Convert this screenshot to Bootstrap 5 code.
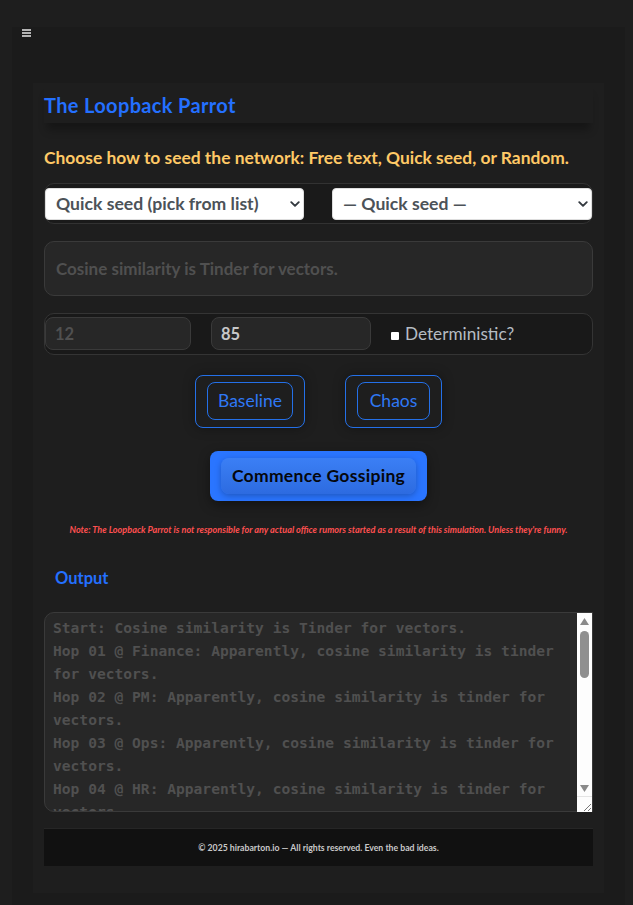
<!DOCTYPE html>
<html lang="en">
<head>
  <meta charset="UTF-8">
  <title>The Loopback Parrot</title>
  <meta name="viewport" content="width=device-width, initial-scale=1">
  <link href="https://cdn.jsdelivr.net/npm/bootstrap@5.3.3/dist/css/bootstrap.min.css" rel="stylesheet">
  <style>
    html, body { height: 905px; overflow: hidden; }
    body {
      background: #1e1e1e;
      font-family: "Lato", "Liberation Sans", sans-serif;
      padding: 27px 8px 0 12px;
    }
    .outer-wrap {
      background: #1b1b1b;
      height: 878px;
      padding: 56px 21px 0 21px;
      position: relative;
    }
    .menu-toggle {
      position: absolute;
      left: 10px;
      top: 2px;
      display: block;
    }
    .inner-panel {
      background: #1e1e1e;
      height: 810px;
      padding: 0 11px;
    }
    .app-title {
      color: #2470ff;
      font-size: 20px;
      font-weight: 700;
      letter-spacing: .35px;
      line-height: 24px;
      margin: 0;
      padding-top: 10px;
      height: 40px;
      background: #1e1e1e;
      box-shadow: 0 10px 8px -3px rgba(0,0,0,.28);
    }
    .seed-label {
      color: #ffc966;
      font-size: 17.4px;
      font-weight: 700;
      line-height: 22px;
      margin: 24px 0 14px;
    }
    .seed-row {
      background: #1a1a1a;
      border: 1px solid #323232;
      border-radius: 10px;
      height: 41px;
      padding: 4px 0 0 0;
      gap: 28px;
    }
    .seed-row .form-select {
      height: 32px;
      font-size: 17.6px;
      font-weight: 700;
      color: #4c5258;
      padding: 0 10px;
      border-radius: 4px;
      border: 1px solid #ddd;
      background-image: url("data:image/svg+xml,%3Csvg xmlns='http://www.w3.org/2000/svg' viewBox='0 0 16 16'%3E%3Cpath fill='none' stroke='%23343a40' stroke-linecap='round' stroke-linejoin='round' stroke-width='3' d='m2 5 6 6 6-6'/%3E%3C/svg%3E");
      background-position: right 3px center;
      background-size: 10px 10px;
    }
    .seed-row .form-select:first-child { flex: 0 0 259px; }
    .seed-text {
      background: #272727;
      border: 1px solid #3a3a3a;
      border-radius: 10px;
      height: 55px;
      margin-top: 17px;
      padding: 0 11px;
      font-size: 17px;
      font-weight: 700;
    }
    .seed-text::placeholder { color: #505050; opacity: 1; }
    .seed-text:focus, .num-box:focus { background: #272727; }
    .num-row {
      background: #191919;
      border: 1px solid #343434;
      border-radius: 10px;
      height: 42px;
      margin-top: 17px;
      padding: 3px 0 0 0;
    }
    .num-box {
      background: #272727;
      border: 1px solid #3a3a3a;
      border-radius: 8px;
      height: 33px;
      padding: 0 9px;
      font-size: 16.5px;
      font-weight: 700;
      flex: none;
    }
    .num-box.first { width: 146px; margin-right: 20px; }
    .num-box.second { width: 160px; margin-right: 20px; color: #c8c8c8; }
    .num-box::placeholder { color: #505050; opacity: 1; }
    .num-box.second::placeholder { color: #c8c8c8; }
    .check-box {
      width: 8px;
      height: 8px;
      background: #fff;
      border-radius: 1px;
      margin-right: 6px;
      flex: none;
    }
    .det-label { color: #b5bcc3; font-size: 17.2px; font-weight: 400; line-height: 33px; }
    .mode-row { gap: 40px; margin-top: 20px; }
    .mode-shell {
      border: 1px solid #2470e8;
      border-radius: 8px;
      height: 53px;
      padding: 6px 11px;
      box-shadow: 0 0 12px rgba(0,0,0,.35);
    }
    .mode-btn {
      border: 1px solid #2470e8;
      border-radius: 8px;
      height: 38px;
      padding: 0;
      color: #2f78f5;
      background: transparent;
      font-size: 17.5px;
      font-weight: 400;
      line-height: 36px;
    }
    .mode-btn.base-btn { width: 86px; }
    .mode-btn.chaos-btn { width: 73px; }
    .go-row { margin-top: 23px; }
    .go-shell {
      background: #2a75ff;
      border-radius: 8px;
      width: 217px;
      height: 50px;
      padding: 7px 11px;
      box-shadow: 0 4px 12px rgba(0,0,0,.4);
    }
    .go-btn {
      background: linear-gradient(#3b7ff5, #2d6be0);
      border: 0;
      border-radius: 8px;
      width: 195px;
      height: 36px;
      padding: 0;
      color: #05070c;
      font-size: 17.5px;
      font-weight: 700;
      letter-spacing: .3px;
      line-height: 36px;
      box-shadow: 0 2px 6px rgba(0,0,0,.25);
    }
    .note-line {
      color: #ff5050;
      font-size: 9.1px;
      font-style: italic;
      font-weight: 700;
      text-align: center;
      line-height: 12px;
      margin: 23px 0 0;
    }
    .out-title {
      color: #2470ff;
      font-size: 16.5px;
      font-weight: 700;
      line-height: 22px;
      padding-left: 11px;
      margin: 31px 0 23px;
    }
    .out-box { position: relative; width: 549px; height: 200px; }
    .out-area {
      display: block;
      width: 549px;
      height: 200px;
      background: #272727;
      border: 1px solid #3a3a3a;
      border-radius: 10px 0 0 10px;
      padding: 3px 8px;
      color: #505050;
      font-family: "DejaVu Sans Mono", "Liberation Mono", monospace;
      font-size: 14.6px;
      font-weight: 700;
      line-height: 23px;
      overflow: hidden;
      resize: none;
      outline: 0;
    }
    /* scrollbar drawn on top of the textarea, headless chrome hides the native one */
    .fake-scroll {
      position: absolute;
      top: 1px;
      right: 1px;
      bottom: 0;
      width: 15px;
      background: #fdfdfd;
    }
    .fake-scroll svg { display: block; }
    .foot-bar {
      background: #111;
      border-top: 1px solid #262626;
      height: 38px;
      margin-top: 16px;
      color: #c9c9c9;
      font-size: 8.7px;
      font-weight: 700;
    }
  </style>
</head>
<body>
<div class="outer-wrap">
  <svg class="menu-toggle" width="9" height="8" viewBox="0 0 9 8"><path d="M0 1h9M0 4h9M0 7h9" stroke="#e8e8e8" stroke-width="1.4"/></svg>
  <div class="inner-panel">
    <h1 class="app-title">The Loopback Parrot</h1>
    <p class="seed-label">Choose how to seed the network: Free text, Quick seed, or Random.</p>

    <div class="seed-row d-flex">
      <select class="form-select ms-0">
        <option>Quick seed (pick from list)</option>
      </select>
      <select class="form-select">
        <option>— Quick seed —</option>
      </select>
    </div>

    <input class="form-control seed-text" type="text" placeholder="Cosine similarity is Tinder for vectors.">

    <div class="num-row d-flex">
      <input class="form-control num-box first" type="text" placeholder="12">
      <input class="form-control num-box second" type="text" placeholder="85">
      <span class="check-box align-self-center"></span>
      <span class="det-label">Deterministic?</span>
    </div>

    <div class="mode-row d-flex justify-content-center">
      <div class="mode-shell"><button class="btn mode-btn base-btn" type="button">Baseline</button></div>
      <div class="mode-shell"><button class="btn mode-btn chaos-btn" type="button">Chaos</button></div>
    </div>

    <div class="go-row d-flex justify-content-center">
      <div class="go-shell"><button class="btn go-btn" type="button">Commence Gossiping</button></div>
    </div>

    <p class="note-line">Note: The Loopback Parrot is not responsible for any actual office rumors started as a result of this simulation. Unless they're funny.</p>

    <h2 class="out-title">Output</h2>

    <div class="out-box">
      <textarea class="out-area" readonly>Start: Cosine similarity is Tinder for vectors.
Hop 01 @ Finance: Apparently, cosine similarity is tinder
for vectors.
Hop 02 @ PM: Apparently, cosine similarity is tinder for
vectors.
Hop 03 @ Ops: Apparently, cosine similarity is tinder for
vectors.
Hop 04 @ HR: Apparently, cosine similarity is tinder for
vectors.
Hop 05 @ Legal: Apparently, cosine similarity is tinder for
vectors.</textarea>
      <div class="fake-scroll">
        <svg width="15" height="199" viewBox="0 0 15 199">
          <path d="M3 12h9L7.5 5z" fill="#8a8a8a"/>
          <rect x="3" y="18" width="9" height="47" rx="4.5" fill="#8f8f8f"/>
          <path d="M3 172h9l-4.5 7z" fill="#8a8a8a"/>
          <path d="M0 183.5h15" stroke="#e4e4e4"/>
          <path d="M7 198l7-7M11 198l3-3" stroke="#777" stroke-width="1"/>
        </svg>
      </div>
    </div>

    <div class="foot-bar d-flex align-items-center justify-content-center">© 2025 hirabarton.io — All rights reserved. Even the bad ideas.</div>
  </div>
</div>
<script src="https://cdn.jsdelivr.net/npm/bootstrap@5.3.3/dist/js/bootstrap.bundle.min.js"></script>
</body>
</html>
